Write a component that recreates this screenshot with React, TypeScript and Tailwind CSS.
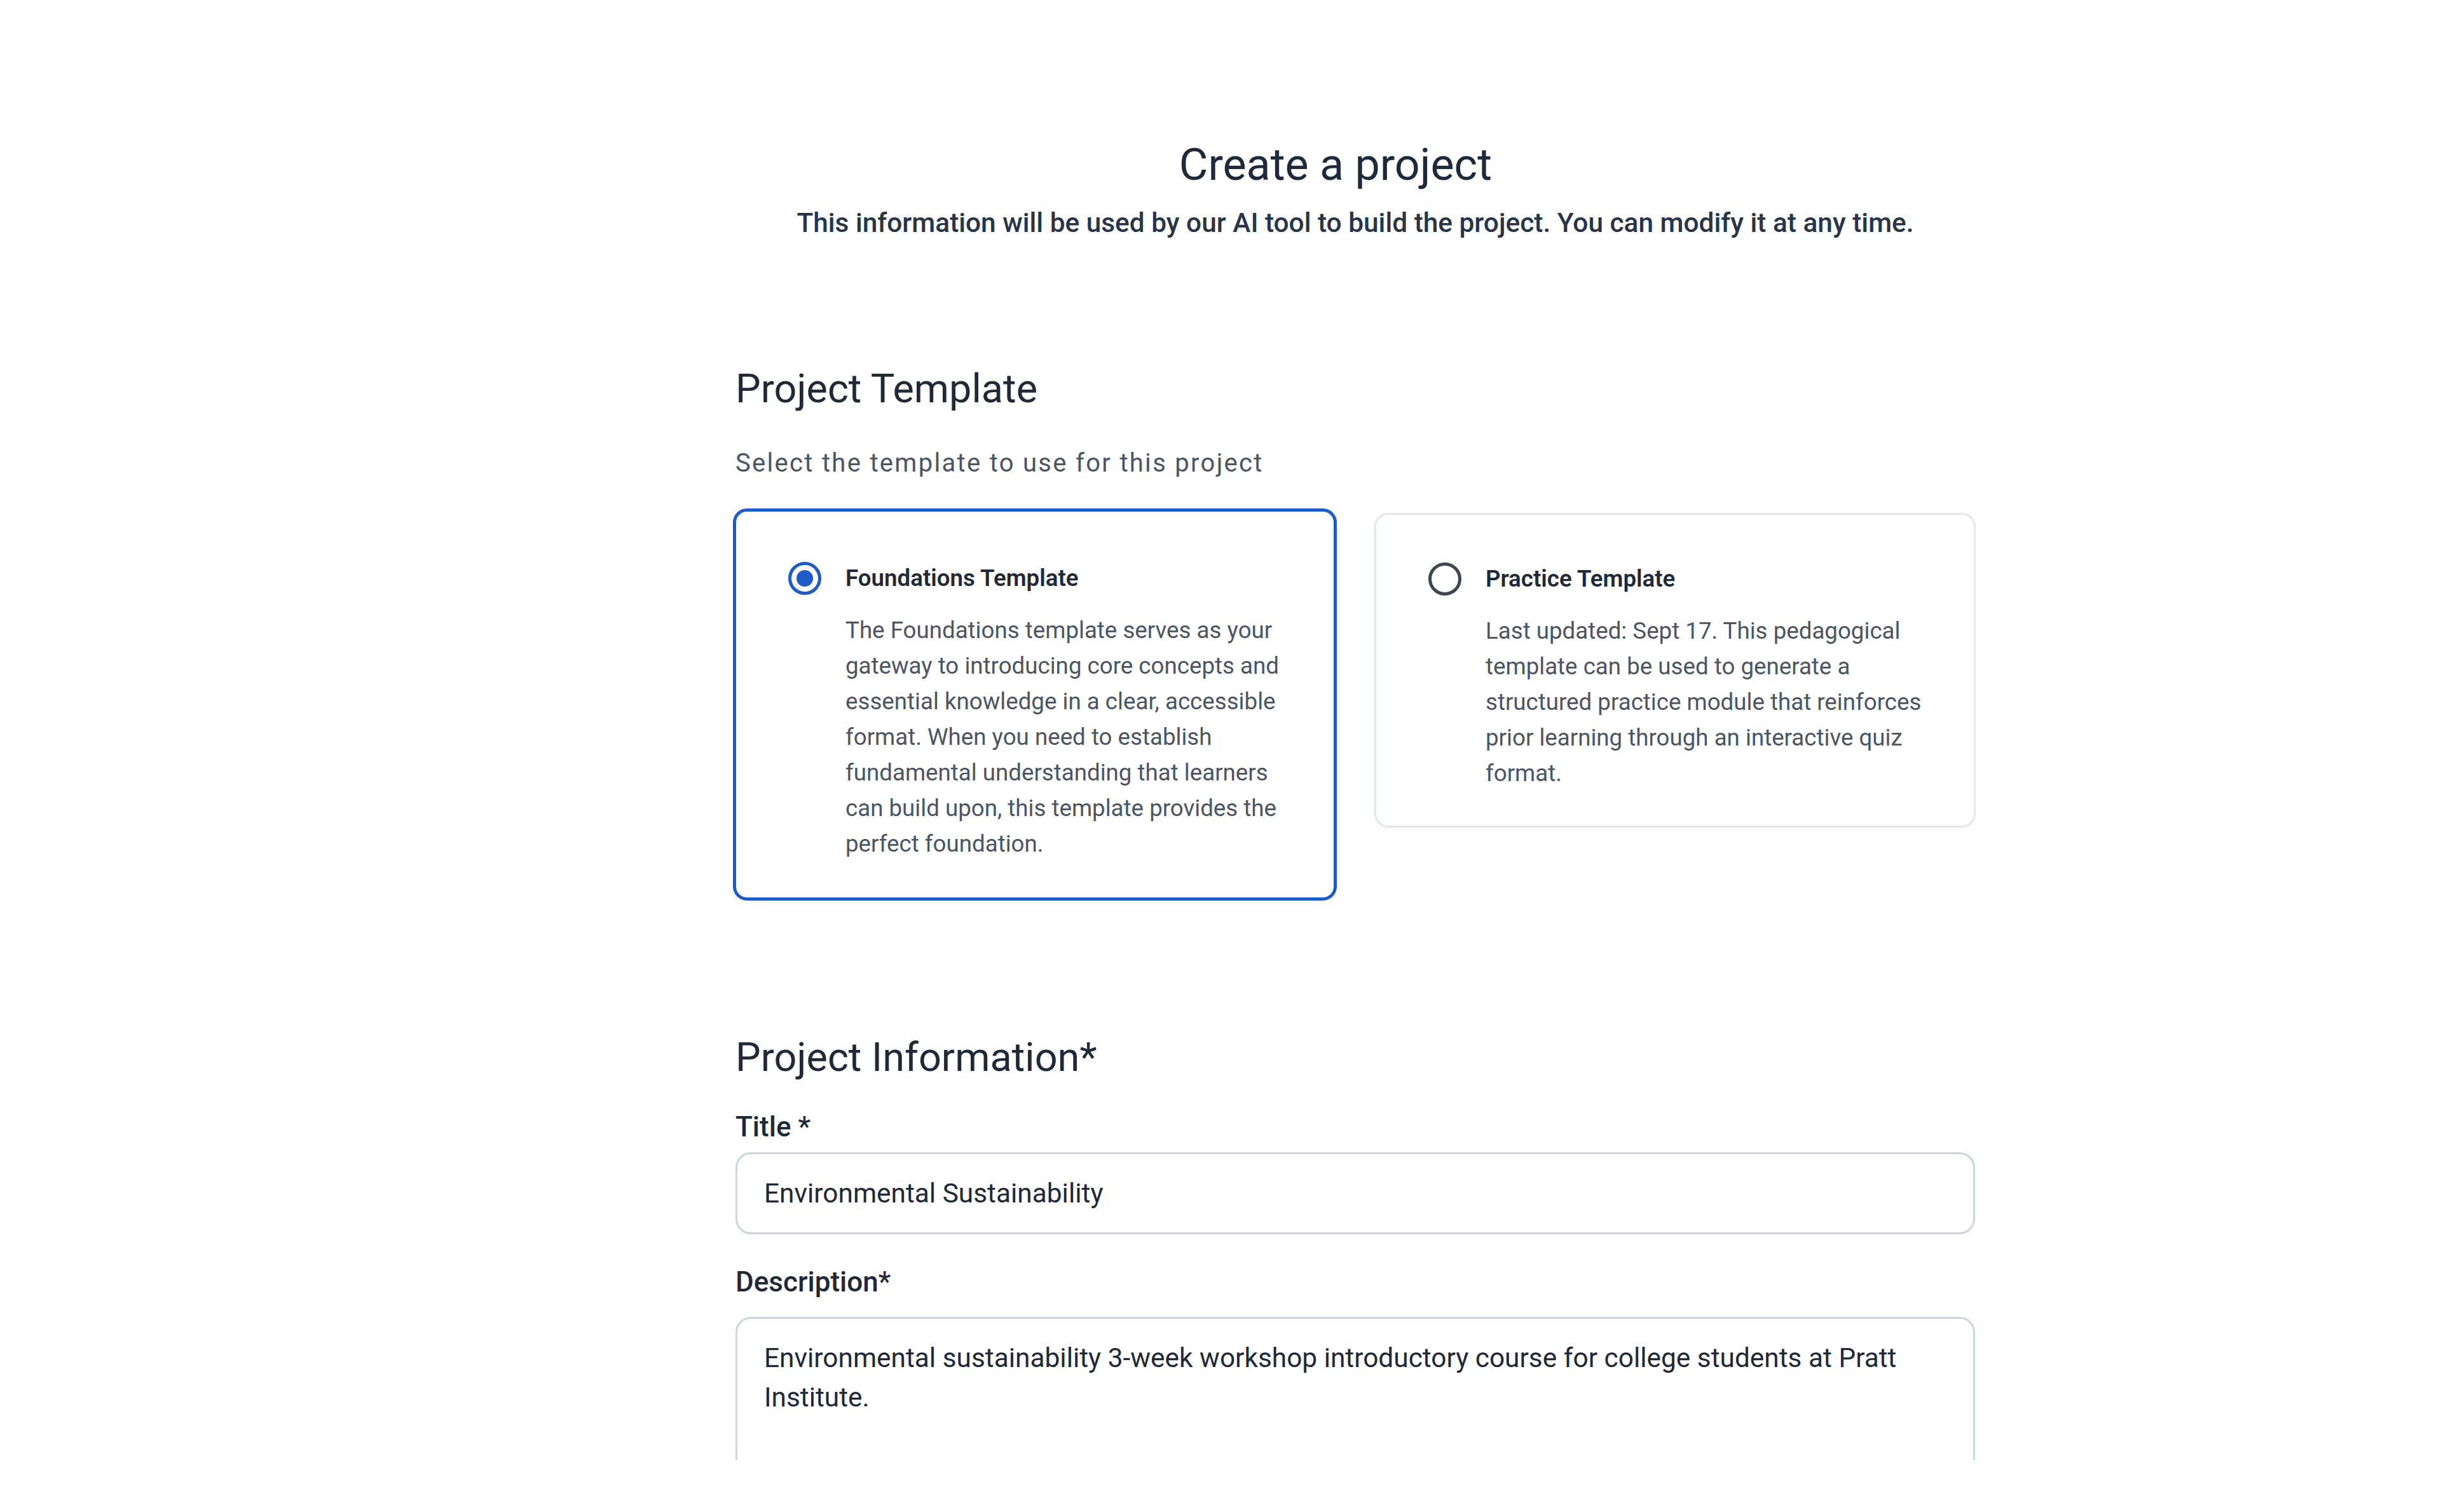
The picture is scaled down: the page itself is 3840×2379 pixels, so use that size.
import React from "react";

function Radio({ checked }: { checked: boolean }) {
  return checked ? (
    <div className="w-[52px] h-[52px] rounded-full border-[5px] border-[#1e5ac8] flex items-center justify-center shrink-0">
      <div className="w-[26px] h-[26px] rounded-full bg-[#1e5ac8]" />
    </div>
  ) : (
    <div className="w-[52px] h-[52px] rounded-full border-[5px] border-[#3f4652] shrink-0" />
  );
}

export default function App() {
  return (
    <div className="h-[2297px] overflow-hidden bg-white font-['Roboto',sans-serif]">
      <div className="flex">
        <div className="w-[424px] shrink-0" />
        <main className="flex-1 flex justify-center">
          <div className="w-[1950px] pt-[224px]">
            <h1 className="pr-[62px] text-center text-[70px] leading-[70px] font-normal text-[#1e293b]">
              Create a project
            </h1>
            <p className="mt-[36px] text-center text-[42.4px] leading-[42px] font-medium text-[#283548]">
              This information will be used by our AI tool to build the project. You can modify it at any time.
            </p>

            <section className="mt-[208px]">
              <h2 className="text-[63px] leading-[63px] font-normal text-[#1f2937]">Project Template</h2>
              <p className="mt-[66px] text-[40px] leading-[40px] tracking-[2.3px] text-[#4b5563]">
                Select the template to use for this project
              </p>
              <div className="mt-[51px] grid grid-cols-[946px_946px] gap-x-[59px] items-start">
                <div className="-ml-[4px] rounded-[22px] border-[5px] border-[#1e5ac8] bg-white pt-[77px] pb-[56px] pl-[82px] pr-[60px]">
                  <div className="flex items-start gap-[38px]">
                    <div className="h-[56px] flex items-center">
                      <Radio checked />
                    </div>
                    <div className="flex-1">
                      <div className="text-[36.7px] leading-[56px] font-semibold text-[#1f2937]">Foundations Template</div>
                      <p className="mt-[26px] text-[36.7px] leading-[56px] text-[#4b5563]">
                        The Foundations template serves as your gateway to introducing core concepts and essential knowledge in a clear, accessible format. When you need to establish fundamental understanding that learners can build upon, this template provides the perfect foundation.
                      </p>
                    </div>
                  </div>
                </div>
                <div className="mt-[7px] rounded-[22px] border-[3px] border-[#e2e8f0] bg-white shadow-[0_2px_4px_rgba(15,23,42,0.05)] pt-[73px] pb-[54px] pl-[82px] pr-[60px]">
                  <div className="flex items-start gap-[38px]">
                    <div className="h-[56px] flex items-center">
                      <Radio checked={false} />
                    </div>
                    <div className="flex-1">
                      <div className="text-[36.7px] leading-[56px] font-semibold text-[#1f2937]">Practice Template</div>
                      <p className="mt-[26px] text-[36.7px] leading-[56px] text-[#4b5563]">
                        Last updated: Sept 17. This pedagogical template can be used to generate a structured practice module that reinforces prior learning through an interactive quiz format.
                      </p>
                    </div>
                  </div>
                </div>
              </div>
            </section>

            <section className="mt-[215px]">
              <h2 className="text-[63px] leading-[63px] font-normal text-[#1f2937]">Project Information*</h2>
              <label className="mt-[56px] block text-[44px] leading-[44px] font-medium text-[#1f2937]">Title *</label>
              <div className="mt-[18px] h-[129px] rounded-[24px] border-[3px] border-[#cbd5e1] flex items-center pl-[42px] pr-[42px]">
                <span className="text-[42.4px] leading-[62px] text-[#1f2937]">Environmental Sustainability</span>
              </div>
              <label className="mt-[53px] block text-[44px] leading-[44px] font-medium text-[#1f2937]">Description*</label>
              <div className="mt-[33px] h-[420px] rounded-[24px] border-[3px] border-[#cbd5e1] pt-[31px] pl-[42px] pr-[42px]">
                <p className="text-[42.4px] leading-[62px] text-[#1f2937]">
                  Environmental sustainability 3-week workshop introductory course for college students at Pratt Institute.
                </p>
              </div>
            </section>
          </div>
        </main>
      </div>
    </div>
  );
}
